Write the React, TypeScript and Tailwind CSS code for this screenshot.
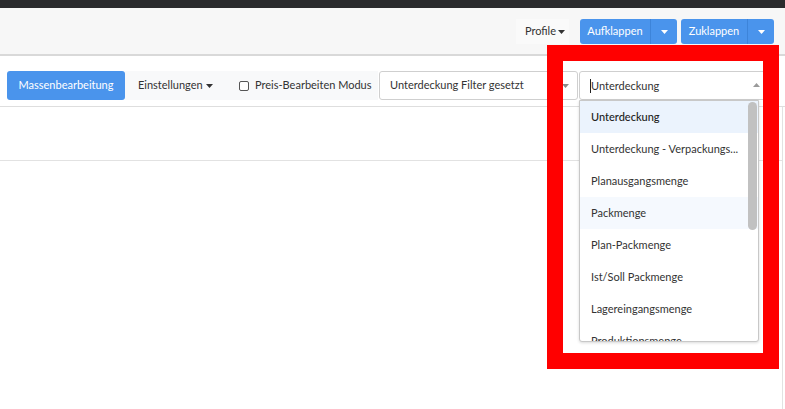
import React from 'react';

const items = [
  'Unterdeckung',
  'Unterdeckung - Verpackungs...',
  'Planausgangsmenge',
  'Packmenge',
  'Plan-Packmenge',
  'Ist/Soll Packmenge',
  'Lagereingangsmenge',
  'Produktionsmenge',
];

const Caret: React.FC<{ up?: boolean; className?: string }> = ({ up, className }) => (
  <svg width="7" height="4" viewBox="0 0 7 4" className={className}>
    {up ? <path d="M0 4 L3.5 0 L7 4 Z" fill="currentColor" /> : <path d="M0 0 L7 0 L3.5 4 Z" fill="currentColor" />}
  </svg>
);

const SplitButton: React.FC<{ label: string; mainW: string }> = ({ label, mainW }) => (
  <div className="flex h-[25px] rounded-[3px] bg-[#4a94ec] text-white overflow-hidden">
    <div className={`${mainW} flex items-center justify-center border-r border-[#3d84d9]`}>{label}</div>
    <div className="w-[26px] flex items-center justify-center">
      <Caret className="text-white" />
    </div>
  </div>
);

export default function App() {
  return (
    <div className="w-[785px] h-[409px] relative overflow-hidden bg-white text-[11px] text-[#333] font-['Lato','Noto_Sans',sans-serif] whitespace-nowrap">
      {/* top bar */}
      <div className="h-2 bg-[#2a2b2d]" />

      {/* navbar */}
      <div className="h-[48px] bg-[#f7f7f7] border-b-2 border-[#d9d9d9] flex items-start justify-end pt-[11px] pr-[11px]">
        <div className="h-[25px] pl-[9px] pr-[4px] flex items-center gap-[2px] bg-[#fafafa] mr-[11px]">
          Profile <Caret className="text-[#333]" />
        </div>
        <SplitButton label="Aufklappen" mainW="w-[71px]" />
        <div className="w-1" />
        <SplitButton label="Zuklappen" mainW="w-[67px]" />
      </div>

      {/* toolbar */}
      <div className="mt-2 h-[43px] border-b border-[#dedede] flex items-start pt-[7px] pl-[7px]">
        <button className="h-[29px] w-[118px] rounded-[3px] bg-[#4a94ec] text-white">Massenbearbeitung</button>
        <div className="h-[29px] w-[100px] bg-[#f8f9fa] flex items-center pl-[13px] gap-[3px]">
          Einstellungen <Caret className="text-[#333]" />
        </div>
        <div className="h-[29px] w-[153px] bg-[#f8f9fa] flex items-center pl-[14px] gap-[6px]">
          <span className="w-[10px] h-[10px] border border-[#555] rounded-[2px] bg-white" />
          Preis-Bearbeiten Modus
        </div>
        <div className="ml-[1px] h-[29px] w-[199px] border border-[#cfcfcf] rounded-[3px] bg-white flex items-center justify-between pl-[10px] pr-[8px]">
          <span>Unterdeckung Filter gesetzt</span>
          <Caret className="text-[#8a8a8a]" />
        </div>
        <div className="ml-[1px] h-[29px] w-[190px] border border-[#cfcfcf] rounded-[3px] bg-white flex items-center pl-[10px] pr-[8px]">
          <span className="border-l border-[#222] leading-[14px]">Unterdeckung</span>
        </div>
      </div>

      {/* content */}
      <div className="h-[54px] border-b border-[#e2e2e2] border-r mr-[2px]" />
      <div className="h-[250px] border-r border-[#e2e2e2] mr-[2px]" />

      {/* up caret in open select */}
      <div className="absolute left-[753px] top-[83px]">
        <Caret up className="text-[#9a9a9a]" />
      </div>

      {/* dropdown list */}
      <div className="absolute left-[579px] top-[100px] w-[180px] h-[242px] bg-white border border-[#c8c8c8] rounded-b-[3px] shadow-[0_1px_3px_rgba(0,0,0,0.15)] overflow-hidden">
        {items.map((it, i) => (
          <div
            key={it}
            className={`h-[32px] flex items-center pl-[11px] pr-[14px] ${i === 0 ? 'bg-[#ebf3fd] text-[#222] font-medium' : i === 3 ? 'bg-[#f5f9fe]' : ''}`}
          >
            {it}
          </div>
        ))}
        <div className="absolute right-[1px] top-[1px] w-[9px] h-[128px] rounded-full bg-[#c1c1c1]" />
      </div>

      {/* red annotation frame */}
      <div className="absolute left-[547px] top-[45px] w-[232px] h-[324px] border-[16px] border-[#ff0000]" />
    </div>
  );
}
